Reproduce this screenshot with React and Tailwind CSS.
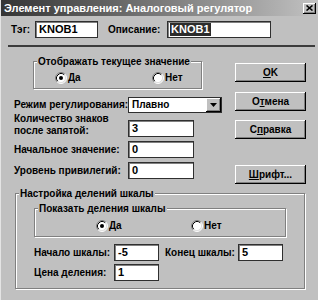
import React from 'react';

const font = { fontFamily: '"Liberation Sans", Arial, sans-serif' };

// Win9x style radio button
const Radio = ({ checked }) => (
  <svg width="12" height="12" viewBox="0 0 12 12" className="shrink-0">
    <circle cx="6" cy="6" r="5" fill="#fff" />
    <path d="M2.11 9.89 A5.5 5.5 0 0 1 9.89 2.11" fill="none" stroke="#808080" strokeWidth="1" />
    <path d="M9.89 2.11 A5.5 5.5 0 0 1 2.11 9.89" fill="none" stroke="#fff" strokeWidth="1" />
    <path d="M2.82 9.18 A4.5 4.5 0 0 1 9.18 2.82" fill="none" stroke="#000" strokeWidth="1" />
    <path d="M9.18 2.82 A4.5 4.5 0 0 1 2.82 9.18" fill="none" stroke="#dfdfdf" strokeWidth="1" />
    {checked && <circle cx="6" cy="6" r="2" fill="#000" />}
  </svg>
);

const Field = ({ value, className = '' }) => (
  <div className={`shrink-0 h-[17px] bg-white border border-[#2f2f2f] shadow-[inset_1px_1px_0_#808080] flex items-center pl-[3px] leading-none text-[11px] ${className}`}>
    {value}
  </div>
);

const Button = ({ children, className = '' }) => (
  <div className={`w-[71px] h-[19px] flex items-center justify-center bg-[#c0c0c0] shadow-[inset_-1px_-1px_0_#000,inset_1px_1px_0_#fff,inset_-2px_-2px_0_#808080] ${className}`}>
    {children}
  </div>
);

const GroupBox = ({ title, className = '', children }) => (
  <fieldset className={`border border-[#808080] shadow-[inset_1px_1px_0_#fff,1px_1px_0_#fff] ${className}`}>
    <legend className="ml-[3px] px-[1px] leading-[13px] bg-[#c0c0c0] whitespace-nowrap">{title}</legend>
    {children}
  </fieldset>
);

export default function App() {
  return (
    <div style={font} className="w-[318px] h-[300px] bg-[#c0c0c0] overflow-hidden text-[10px] leading-[14px] font-bold text-black whitespace-nowrap border-l border-l-[#e4e4e4] flex flex-col">
      {/* title bar */}
      <div className="h-[16px] shrink-0 flex items-center pl-[3px] pr-[2px] bg-linear-to-r from-[#353535] via-[#7a7a7a] to-[#c2c2c2]">
        <span className="text-white text-[11px] leading-none">Элемент управления: Аналоговый регулятор</span>
        <div className="ml-auto w-[13px] h-[11px] bg-[#c0c0c0] flex items-center justify-center shadow-[inset_-1px_-1px_0_#000,inset_1px_1px_0_#fff,inset_-2px_-2px_0_#808080]">
          <svg width="7" height="6" viewBox="0 0 7 6">
            <path d="M0.5 0.5 L6.5 5.5 M6.5 0.5 L0.5 5.5" stroke="#000" strokeWidth="1.6" />
          </svg>
        </div>
      </div>

      {/* tag / description */}
      <div className="mt-[5px] pl-[10px] flex items-center h-[17px]">
        <span className="w-[24px]">Тэг:</span>
        <Field value="KNOB1" className="w-[63px]" />
        <span className="ml-[10px] w-[59px]">Описание:</span>
        <div className="w-[104px] h-[17px] bg-white border border-[#2f2f2f] shadow-[inset_1px_1px_0_#808080] flex items-center pl-[2px] text-[11px]">
          <span className="bg-[#2c2c2c] text-white px-[1px] leading-[13px]">KNOB1</span>
        </div>
      </div>

      <div className="mt-[7px] ml-[7px] w-[307px] h-[2px] bg-[#3c3c3c]" />

      {/* middle */}
      <div className="flex pl-[13px]">
        <div className="w-[220px] shrink-0">
          <GroupBox title="Отображать текущее значение" className="mt-[8px] ml-[19px] w-[169px] h-[34px]">
            <div className="flex items-center pt-[3px] pl-[21px]">
              <div className="w-[97px] flex items-center gap-[1px]">
                <Radio checked />
                <span>Да</span>
              </div>
              <div className="flex items-center gap-[1px]">
                <Radio />
                <span>Нет</span>
              </div>
            </div>
          </GroupBox>

          <div className="mt-[8px] flex items-center h-[16px]">
            <span className="w-[114px] shrink-0">Режим регулирования:</span>
            <div className="w-[94px] h-[16px] bg-white border border-[#2f2f2f] flex items-center">
              <span className="pl-[3px] leading-none">Плавно</span>
              <div className="ml-auto w-[15px] h-[14px] bg-[#c0c0c0] flex items-center justify-center shadow-[inset_-1px_-1px_0_#000,inset_1px_1px_0_#fff,inset_-2px_-2px_0_#808080]">
                <svg width="7" height="4" viewBox="0 0 7 4">
                  <path d="M0 0 H7 L3.5 4 Z" fill="#000" />
                </svg>
              </div>
            </div>
          </div>

          <div className="flex items-end">
            <span className="w-[114px] shrink-0 leading-[12px]">Количество знаков<br />после запятой:</span>
            <Field value="3" className="w-[66px]" />
          </div>
          <div className="mt-[4px] flex items-center">
            <span className="w-[114px] shrink-0">Начальное значение:</span>
            <Field value="0" className="w-[66px]" />
          </div>
          <div className="mt-[4px] flex items-center">
            <span className="w-[114px] shrink-0">Уровень привилегий:</span>
            <Field value="0" className="w-[66px]" />
          </div>
        </div>

        <div className="ml-[1px] flex flex-col">
          <Button className="mt-[16px]"><span><u>O</u>K</span></Button>
          <Button className="mt-[10px]"><span>О<u>т</u>мена</span></Button>
          <Button className="mt-[9px]"><span>С<u>п</u>равка</span></Button>
          <Button className="mt-[26px]"><span><u>Ш</u>рифт...</span></Button>
        </div>
      </div>

      {/* scale settings */}
      <GroupBox title="Настройка делений шкалы" className="mt-[3px] ml-[14px] w-[290px] h-[102px]">
        <GroupBox title="Показать деления шкалы" className="mt-[2px] ml-[18px] w-[252px] h-[35px]">
          <div className="flex items-center pt-[4px] pl-[61px]">
            <div className="w-[95px] flex items-center gap-[1px]">
              <Radio checked />
              <span>Да</span>
            </div>
            <div className="flex items-center gap-[1px]">
              <Radio />
              <span>Нет</span>
            </div>
          </div>
        </GroupBox>

        <div className="mt-[7px] ml-[18px] flex items-center">
          <span className="w-[80px] shrink-0">Начало шкалы:</span>
          <Field value="-5" className="w-[45px]" />
          <span className="ml-[6px] w-[73px] shrink-0">Конец шкалы:</span>
          <Field value="5" className="w-[45px]" />
        </div>
        <div className="mt-[3px] ml-[18px] flex items-center">
          <span className="w-[80px] shrink-0">Цена деления:</span>
          <Field value="1" className="w-[45px]" />
        </div>
      </GroupBox>
    </div>
  );
}
